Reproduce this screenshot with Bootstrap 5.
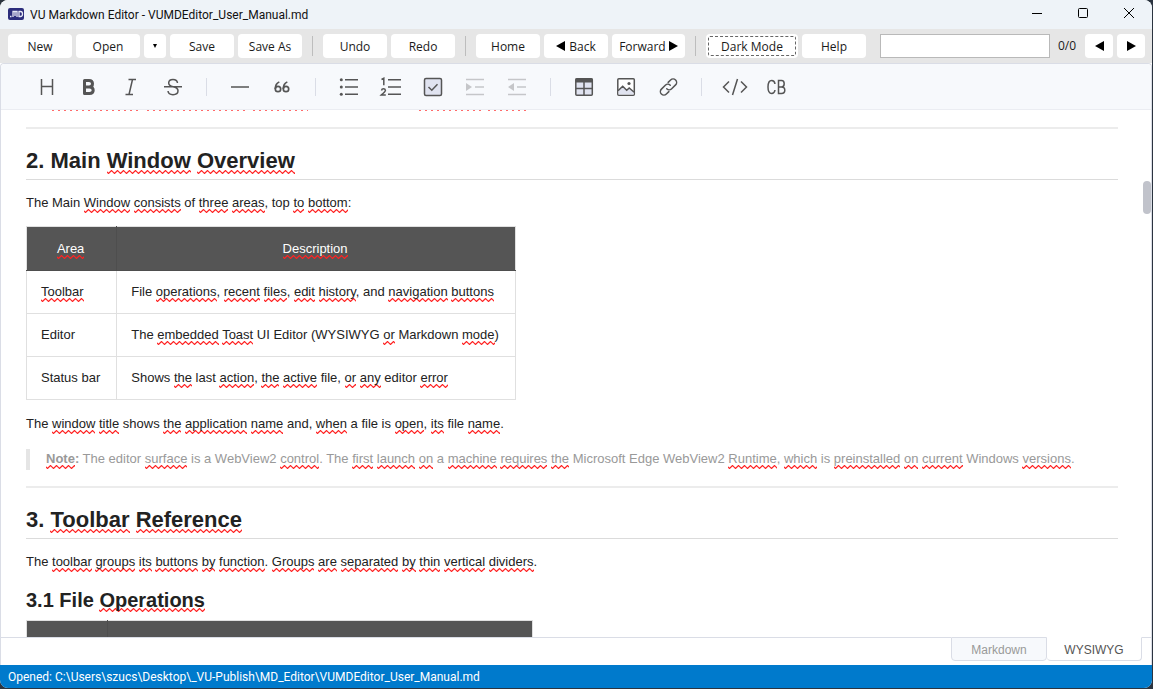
<!DOCTYPE html>
<html lang="en">
<head>
<meta charset="utf-8">
<meta name="viewport" content="width=device-width, initial-scale=1">
<title>VU Markdown Editor - VUMDEditor_User_Manual.md</title>
<link href="https://cdn.jsdelivr.net/npm/bootstrap@5.3.0/dist/css/bootstrap.min.css" rel="stylesheet">
<style>
:root { --line: #dadde6; --ink: #222; --wave: url("data:image/svg+xml,%3Csvg xmlns='http://www.w3.org/2000/svg' width='6' height='4'%3E%3Cpath d='M-1.5 .5 1.5 3.500 4.500 .5 7.500 3.500' fill='none' stroke='%23f22' stroke-width='1.200'/%3E%3C/svg%3E"); }
body { background: #2b3440; color: #1a1a1a; font: 12px/16px "Open Sans", "Noto Sans", sans-serif; }
.app-window { height: calc(100vh - 1px); margin-right: 1px; border-radius: 8px; background: #fff; }
.title-bar { background: #eef3f8; height: 29px; color: #111; }
.title-text, .status-bar { font-family: Roboto, "Open Sans", sans-serif; }
.title-text { padding-left: 6px; }
.win-btn { width: 46px; height: 26px; }
.command-bar { background: #e6e6e6; height: 34px; gap: 4px; padding: 0 7px 0 8px; }
.cmd { --bs-btn-font-size: 12px; --bs-btn-line-height: 16px; --bs-btn-padding-x: 4px; --bs-btn-bg: #fff; --bs-btn-border-radius: 4px; --bs-btn-color: #1a1a1a; --bs-btn-border-width: 0; --bs-btn-hover-bg: #f4f8fc; padding-top: 5px; padding-bottom: 3px; min-width: 64px; height: 24px; white-space: nowrap; flex: none; }
.cmd svg { vertical-align: baseline; }
.cmd-glyph { padding: 0; display: flex; align-items: center; justify-content: center; }
.cmd-arrow { min-width: 22px; }
.cmd-nav { min-width: 28px; }
.cmd-forward { min-width: 73px; }
.cmd-dark { min-width: 92px; outline: 1px dashed #666; outline-offset: -3px; }
.cmd-rule { width: 1px; height: 20px; background: #bdbdbd; margin: 0 6px; }
.find-box { width: 170px; height: 24px; border: 1px solid #b9b9b9; border-radius: 0; margin-left: 10px; font-size: 12px; padding: 2px 6px; }
.editor { border: 1px solid var(--line); border-width: 1px 1px 0; border-radius: 4px 4px 0 0; font-family: "Liberation Sans", Arial, sans-serif; font-size: 13px; line-height: 21px; min-height: 0; }
.format-bar { background: #f7f9fc; border-bottom: 1px solid #ebedf2; border-radius: 4px 4px 0 0; height: 46px; gap: 10px; padding: 0 30px; }
.tool { width: 32px; height: 32px; padding: 0; border: 0; background: none; color: #555; line-height: 0; flex: none; }
.tool:disabled { color: #c5c6c9; }
.tool-rule { width: 1px; height: 18px; background: var(--line); margin: 0 7px; flex: none; }
.doc-pane { min-height: 0; }
.doc { min-height: 0; color: var(--ink); padding: 0 33px 0 25px; }
.wave-tail { height: 1px; margin-left: 26px; }
.wave-tail i { background: repeating-linear-gradient(90deg, #ff6b6b 0 2px, transparent 2px 6px); height: 1px; }
.doc hr { height: 2px; margin: 16px 0 0; border: 0; background: #ececec; opacity: 1; }
.doc h2 { font-size: 22px; line-height: 23px; font-weight: 700; margin: 20px 0 13px; padding-bottom: 7px; border-bottom: 1px solid #dbdbdb; }
.doc h3 { font-size: 20px; line-height: 18px; font-weight: 700; margin: 18px 0 11px; }
.doc p { margin: 0; line-height: 19px; padding-bottom: 2px; }
.doc u { text-decoration: none; background: var(--wave) 0 100% repeat-x; padding-bottom: 3px; }
.doc h2 u, .doc h3 u { padding-bottom: 1px; }
.doc-table { border-collapse: collapse; margin: 12px 0 14px; }
.doc h3 + .doc-table { margin-top: 0; }
.doc-table th, .doc-table td { border: 1px solid #e0e0e0; padding: 10px 16px 11px 14px; }
.doc-table th { background: #555; color: #fff; font-weight: 400; text-align: center; border-color: #e0e0e0 #4e4e4e #4e4e4e; padding: 11px 16px 11px 14px; }
.doc-table th:first-child { border-left-color: #e0e0e0; }
.doc-table th:last-child { border-right-color: #e0e0e0; }
.doc blockquote { margin: 14px 0 0; padding: 0 16px 2px; border-left: 4px solid #e5e5e5; color: #999; font-size: 13px; line-height: 19px; }
.scroll-thumb { right: 0; top: 71px; width: 8px; height: 33px; border-radius: 4px; background: #c1c3cb; }
.mode-bar { height: 28px; }
.mode-line { border-top: 1px solid var(--line); }
.mode-end { width: 9px; }
.mode-tab { width: 96px; height: 24px; border: 1px solid var(--line); border-radius: 0 0 4px 4px; background: #f7f9fc; color: #999; padding: 2px 0 0; font-size: 12px; line-height: 20px; }
.mode-tab.active { border-top-color: transparent; border-left: 0; background: #fff; color: #555; width: 95px; }
.status-bar { background: #007acc; color: #fff; height: 23px; padding: 0 8px; }
</style>
</head>
<body>
<div class="app-window d-flex flex-column overflow-hidden">
  <header class="title-bar d-flex align-items-start ps-2 flex-shrink-0">
    <svg class="align-self-center" width="16" height="14" viewBox="0 0 16 14" aria-hidden="true"><rect width="16" height="12" rx="2" fill="#2b2d7c"/><path d="M2 8.500h1.500M5 9V3.500h4V9M7 4v4M10.500 3.500h2q2 0 2 2.500t-2 2.500h-2M11 3v6" fill="none" stroke="#e6e8f5" stroke-width="1.300"/></svg>
    <span class="title-text me-auto text-nowrap align-self-center">VU Markdown Editor - VUMDEditor_User_Manual.md</span>
    <button type="button" class="win-btn btn border-0 p-0 d-flex align-items-center justify-content-center" aria-label="Minimize"><svg width="10" height="10"><path d="M0 5.500h10" stroke="#000"/></svg></button>
    <button type="button" class="win-btn btn border-0 p-0 d-flex align-items-center justify-content-center" aria-label="Maximize"><svg width="10" height="10"><rect x=".5" y=".5" width="9" height="9" rx="1" fill="none" stroke="#000"/></svg></button>
    <button type="button" class="win-btn btn border-0 p-0 d-flex align-items-center justify-content-center" aria-label="Close"><svg width="10" height="10"><path d="M0 0l10 10M10 0L0 10" stroke="#000"/></svg></button>
  </header>

  <nav class="command-bar d-flex align-items-center flex-shrink-0" aria-label="Main toolbar">
    <button type="button" class="btn cmd">New</button>
    <button type="button" class="btn cmd">Open</button>
    <button type="button" class="btn cmd cmd-glyph cmd-arrow" aria-label="Recent files"><svg width="4" height="4"><path d="M0 0h4L2 4z"/></svg></button>
    <button type="button" class="btn cmd">Save</button>
    <button type="button" class="btn cmd">Save As</button>
    <span class="cmd-rule"></span>
    <button type="button" class="btn cmd">Undo</button>
    <button type="button" class="btn cmd">Redo</button>
    <span class="cmd-rule"></span>
    <button type="button" class="btn cmd">Home</button>
    <button type="button" class="btn cmd"><svg width="10" height="10"><path d="M9 0v10L0 5z"/></svg> Back</button>
    <button type="button" class="btn cmd cmd-forward">Forward <svg width="9" height="10"><path d="M0 0v10l9-5z"/></svg></button>
    <span class="cmd-rule"></span>
    <button type="button" class="btn cmd cmd-dark">Dark Mode</button>
    <button type="button" class="btn cmd">Help</button>
    <input type="text" class="find-box" aria-label="Find in document">
    <span class="mx-1">0/0</span>
    <button type="button" class="btn cmd cmd-glyph cmd-nav ms-auto" aria-label="Previous match"><svg width="9" height="10"><path d="M9 0v10L0 5z"/></svg></button>
    <button type="button" class="btn cmd cmd-glyph cmd-nav" aria-label="Next match"><svg width="9" height="10"><path d="M0 0v10l9-5z"/></svg></button>
  </nav>

  <main class="editor d-flex flex-column flex-grow-1">
    <div class="format-bar d-flex align-items-center flex-shrink-0" role="toolbar" aria-label="Formatting">
      <button type="button" class="tool" aria-label="Headings"><svg width="32" height="32"><path d="M10.500 8v16M21.500 8v16M10.500 15.500h11" stroke="currentColor" stroke-width="1.500"/></svg></button>
      <button type="button" class="tool" aria-label="Bold"><svg width="32" height="32"><path d="M11.500 9.500h4.500q3.500 0 3.500 3.200t-3.500 3.200h-4.500zM11.500 16h5q3.700 0 3.700 3.200t-3.700 3.200h-5z" fill="none" stroke="currentColor" stroke-width="3" stroke-linejoin="round"/></svg></button>
      <button type="button" class="tool" aria-label="Italic"><svg width="32" height="32"><path d="M13.500 8.500h7.500M10.500 23.500H18M17.500 8.500l-3.500 15" fill="none" stroke="currentColor" stroke-width="1.500"/></svg></button>
      <button type="button" class="tool" aria-label="Strike"><svg width="32" height="32"><path d="M7 15.800h18M20.500 12q-.5-3.500-4.500-3.500-4.300 0-4.300 3.500 0 2.800 4.300 3.800 5 1 5 4 0 3.900-5 3.900-4.600 0-5-3.700" fill="none" stroke="currentColor" stroke-width="1.500"/></svg></button>
      <span class="tool-rule"></span>
      <button type="button" class="tool" aria-label="Line"><svg width="32" height="32"><path d="M7 16h18" stroke="currentColor" stroke-width="1.500"/></svg></button>
      <button type="button" class="tool" aria-label="Blockquote"><svg width="32" height="32"><g fill="none" stroke="currentColor" stroke-width="1.700"><circle cx="12" cy="18" r="2.700"/><circle cx="20" cy="18" r="2.700"/><path d="M13.300 11q-4 1.500-4 7M21.300 11q-4 1.500-4 7"/></g></svg></button>
      <span class="tool-rule"></span>
      <button type="button" class="tool" aria-label="Unordered list"><svg width="32" height="32"><path d="M12 8.700h13M12 16h13M12 23.300h13" stroke="currentColor" stroke-width="1.500"/><g fill="currentColor"><circle cx="8.300" cy="8.700" r="1.500"/><circle cx="8.300" cy="16" r="1.500"/><circle cx="8.300" cy="23.300" r="1.500"/></g></svg></button>
      <button type="button" class="tool" aria-label="Ordered list"><svg width="32" height="32"><path d="M13 8.700h13M13 16h13M13 23.300h13M6.500 8.500L8.800 7.300v7M6.500 19.500q.3-1.700 2-1.700t1.900 1.600q0 1-4 4.500h4.400" fill="none" stroke="currentColor" stroke-width="1.500"/></svg></button>
      <button type="button" class="tool" aria-label="Task"><svg width="32" height="32"><rect x="7.500" y="7.500" width="17" height="17" rx="1.500" fill="#e0e3f0" stroke="currentColor" stroke-width="1.500"/><path d="M11.500 16l3.300 3.200 5.700-6" fill="none" stroke="currentColor" stroke-width="1.500"/></svg></button>
      <button type="button" class="tool" aria-label="Indent" disabled><svg width="32" height="32"><path d="M7 8.500h18M16 16h9M7 23.500h18" stroke="currentColor" stroke-width="1.500"/><path d="M7 12l6 4-6 4z" fill="currentColor"/></svg></button>
      <button type="button" class="tool" aria-label="Outdent" disabled><svg width="32" height="32"><path d="M7 8.500h18M16 16h9M7 23.500h18" stroke="currentColor" stroke-width="1.500"/><path d="M13 12l-6 4 6 4z" fill="currentColor"/></svg></button>
      <span class="tool-rule"></span>
      <button type="button" class="tool" aria-label="Insert table"><svg width="32" height="32"><rect x="7.800" y="7.800" width="16.500" height="16.500" rx="1" fill="#e0e3f0" stroke="currentColor" stroke-width="1.500"/><path d="M7.500 7.500h17v4h-17z" fill="currentColor"/><path d="M16 11v13M8 17.500h16" stroke="currentColor" stroke-width="1.500"/></svg></button>
      <button type="button" class="tool" aria-label="Insert image"><svg width="32" height="32"><rect x="7.800" y="7.800" width="16.500" height="16.500" rx="1" fill="#fff" stroke="currentColor" stroke-width="1.500"/><path d="M8.500 19.500l4.200-4.200 4 4 2.500-2.300 4.500 4v2.500H8.500z" fill="#e0e3f0"/><path d="M8 19.800l4.700-4.500 4 4 2.500-2.300 5 4.300" fill="none" stroke="currentColor" stroke-width="1.500"/><circle cx="19" cy="12.500" r="1.600" fill="currentColor"/></svg></button>
      <button type="button" class="tool" aria-label="Insert link"><svg width="32" height="32"><g transform="rotate(-45 16.500 16)" fill="none" stroke="currentColor" stroke-width="1.500" stroke-linecap="round"><path d="M13.500 19.500H10a3.500 3.500 0 0 1 0-7h5.500a3.500 3.500 0 0 1 3.500 3.500M19.500 12.500H23a3.500 3.500 0 0 1 0 7h-5.500a3.500 3.500 0 0 1-3.500-3.500"/></g></svg></button>
      <span class="tool-rule"></span>
      <button type="button" class="tool" aria-label="Inline code"><svg width="32" height="32"><path d="M10 10.500L4.500 16l5.500 5.500M22 10.500l5.500 5.500-5.500 5.500M18.500 8l-5 16" fill="none" stroke="currentColor" stroke-width="1.500"/></svg></button>
      <button type="button" class="tool" aria-label="Insert code block"><svg width="32" height="32"><path d="M14 13q-.5-3.500-3.300-3.500Q7 9.500 7 16t3.700 6.500q2.800 0 3.300-3.500M17.500 16h3q3.300 0 3.300 3.200t-3.300 3.200h-3V9.600h3q2.700 0 2.700 3.200T20.500 16" fill="none" stroke="currentColor" stroke-width="1.500"/></svg></button>
    </div>

    <div class="doc-pane position-relative d-flex flex-column flex-grow-1 overflow-hidden">
      <article class="doc flex-grow-1 overflow-hidden">
        <div class="wave-tail d-flex" aria-hidden="true"><i style="width:86px"></i><i style="width:98px;margin-left:9px"></i><i style="width:55px;margin-left:8px"></i><i style="width:63px;margin-left:111px"></i><i style="width:38px;margin-left:6px"></i></div>
        <hr>
        <h2>2. Main <u>Window</u> <u>Overview</u></h2>
        <p>The Main <u>Window</u> <u>consists</u> of <u>three</u> <u>areas</u>, top <u>to</u> <u>bottom</u>:</p>
        <table class="doc-table">
          <thead><tr><th scope="col"><u>Area</u></th><th scope="col"><u>Description</u></th></tr></thead>
          <tbody>
            <tr><td><u>Toolbar</u></td><td>File <u>operations</u>, <u>recent</u> <u>files</u>, <u>edit</u> <u>history</u>, and <u>navigation</u> <u>buttons</u></td></tr>
            <tr><td>Editor</td><td>The <u>embedded</u> <u>Toast</u> UI Editor (WYSIWYG <u>or</u> Markdown <u>mode</u>)</td></tr>
            <tr><td>Status bar</td><td>Shows <u>the</u> last <u>action</u>, <u>the</u> <u>active</u> file, <u>or</u> <u>any</u> editor <u>error</u></td></tr>
          </tbody>
        </table>
        <p>The <u>window</u> <u>title</u> shows <u>the</u> <u>application</u> <u>name</u> and, <u>when</u> a file is <u>open</u>, <u>its</u> file <u>name</u>.</p>
        <blockquote><strong><u>Note</u>:</strong> The editor <u>surface</u> is a WebView2 <u>control</u>. The <u>first</u> <u>launch</u> <u>on</u> a <u>machine</u> <u>requires</u> <u>the</u> Microsoft Edge WebView2 <u>Runtime</u>, <u>which</u> is <u>preinstalled</u> <u>on</u> <u>current</u> Windows <u>versions</u>.</blockquote>
        <hr>
        <h2>3. <u>Toolbar</u> <u>Reference</u></h2>
        <p>The <u>toolbar</u> <u>groups</u> <u>its</u> <u>buttons</u> <u>by</u> <u>function</u>. <u>Groups</u> <u>are</u> <u>separated</u> <u>by</u> <u>thin</u> <u>vertical</u> <u>dividers</u>.</p>
        <h3>3.1 File <u>Operations</u></h3>
        <table class="doc-table">
          <colgroup><col style="width:81px"><col style="width:425px"></colgroup>
          <thead><tr><th>&nbsp;</th><th>&nbsp;</th></tr></thead>
        </table>
      </article>
      <div class="scroll-thumb position-absolute"></div>
    </div>

    <div class="mode-bar d-flex flex-shrink-0 align-items-start">
      <span class="mode-line flex-grow-1"></span>
      <button type="button" class="mode-tab">Markdown</button>
      <button type="button" class="mode-tab active">WYSIWYG</button>
      <span class="mode-line mode-end"></span>
    </div>
  </main>

  <footer class="status-bar d-flex align-items-center flex-shrink-0">Opened: C:\Users\szucs\Desktop\_VU-Publish\MD_Editor\VUMDEditor_User_Manual.md</footer>
</div>
<script src="https://cdn.jsdelivr.net/npm/bootstrap@5.3.0/dist/js/bootstrap.bundle.min.js"></script>
</body>
</html>
